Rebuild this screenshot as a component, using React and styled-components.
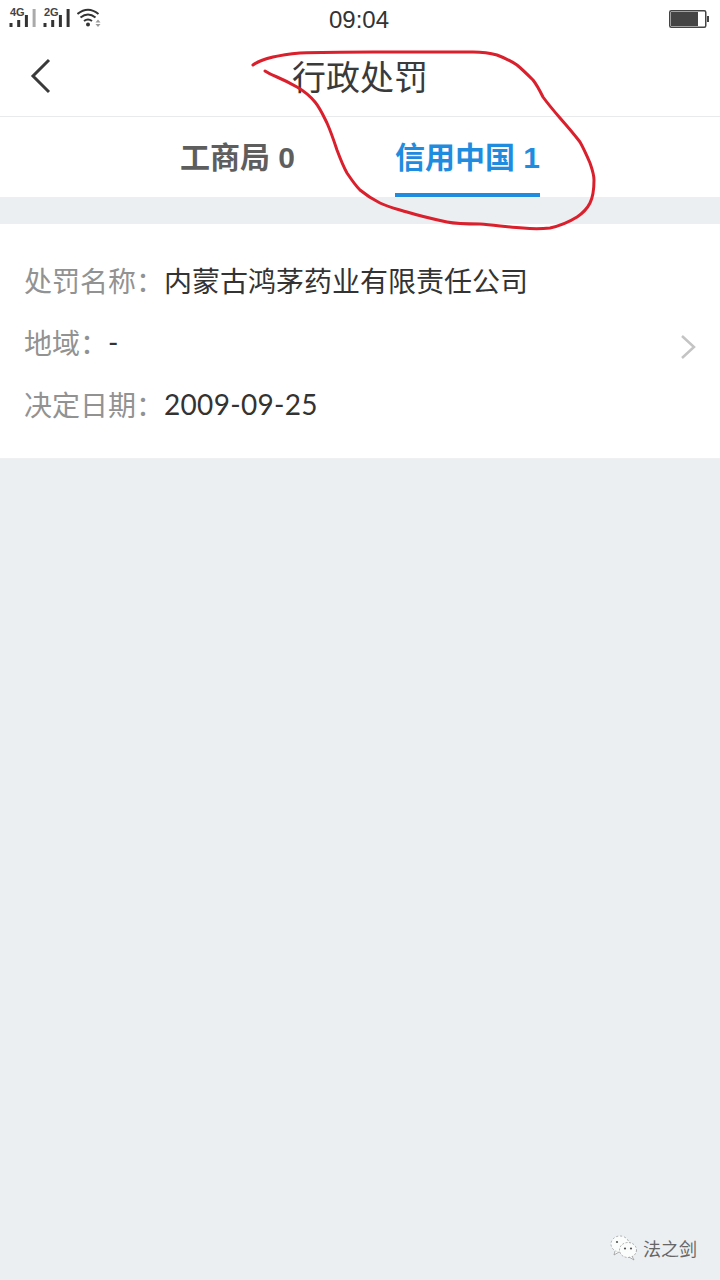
import React from 'react'
import styled, {createGlobalStyle} from 'styled-components'

const GlobalStyle = createGlobalStyle`
    html, body {
        margin: 0;
        padding: 0;
        background: #ebeff2;
    }
    body {
        font-family: "Liberation Sans", "Noto Sans CJK SC", sans-serif;
    }
`

const Page = styled.div`
    position: relative;
    width: 720px;
    height: 1280px;
    overflow: hidden;
    background: #ebeff2;
`

const StatusBar = styled.div`
    height: 38px;
    background: #fff;
    display: flex;
    align-items: center;
    justify-content: space-between;
    padding: 0 11px 0 9px;
    box-sizing: border-box;
`

const StatusSide = styled.div`
    width: 120px;
    display: flex;
    align-items: center;
    justify-content: ${props => props.$end ? 'flex-end' : 'flex-start'};
    padding-bottom: ${props => props.$end ? '0' : '6px'};
`

const Time = styled.div`
    font-size: 24px;
    color: #333;
    padding-top: 1px;
`

const Header = styled.div`
    height: 78px;
    background: #fff;
    border-bottom: 1px solid #e8eaec;
    display: flex;
    align-items: center;
    justify-content: center;
    position: relative;
`

const BackButton = styled.div`
    position: absolute;
    left: 29px;
    top: 20px;
    line-height: 0;
`

const Title = styled.div`
    font-size: 34px;
    color: #3a3a3a;
    margin-top: -4px;
`

const Tabs = styled.div`
    height: 80px;
    background: #fff;
    display: flex;
    justify-content: center;
    gap: 100px;
`

const Tab = styled.div`
    height: 80px;
    box-sizing: border-box;
    display: flex;
    align-items: center;
    font-size: 30px;
    font-weight: 700;
    color: ${props => props.$active ? '#1f8ce0' : '#5e5e5e'};
    border-bottom: 4px solid ${props => props.$active ? '#1f8ce0' : 'transparent'};
`

const Card = styled.div`
    margin-top: 27px;
    height: 235px;
    background: #fff;
    border-bottom: 1px solid #eef0f2;
    box-sizing: border-box;
    padding: 25px 25px 0 24px;
    display: flex;
    align-items: center;
    justify-content: space-between;
    position: relative;
`

const Rows = styled.div`
    display: flex;
    flex-direction: column;
    align-self: flex-start;
`

const Row = styled.div`
    height: 62px;
    display: flex;
    align-items: center;
    font-size: 28px;
`

const Label = styled.span`
    color: #929292;
`

const Value = styled.span`
    color: #333;
    font-family: ${props => props.$digits ? '"Lato", sans-serif' : 'inherit'};
    letter-spacing: ${props => props.$digits ? '0.3px' : '0'};
`

const Chevron = styled.div`
    line-height: 0;
    margin-right: -1px;
    margin-top: -14px;
`

const Watermark = styled.div`
    position: absolute;
    right: 23px;
    bottom: 18px;
    display: flex;
    align-items: center;
    gap: 5px;
    font-size: 18px;
    color: #666;
`

const Scribble = styled.svg`
    position: absolute;
    left: 0;
    top: 0;
    pointer-events: none;
`

function Signal({label, lastGrey}) {
    const heights = [4, 7, 12, 18]
    return (
        <svg width="34" height="24" viewBox="0 0 34 24">
            <text x="1" y="12" fontSize="11" fontWeight="700" fill="#444" fontFamily="Liberation Sans">{label}</text>
            {heights.map((h, i) => (
                <rect key={i} x={0.5 + i * 7.700} y={23 - h} width="3" height={h} fill={i === 3 && lastGrey ? '#aaa' : '#333'} />
            ))}
        </svg>
    )
}

function Wifi() {
    return (
        <svg width="24" height="24" viewBox="0 -4 24 24" fill="none" stroke="#333" strokeWidth="2">
            <path d="M0.500 6 Q11 -2.500 21.500 6" />
            <path d="M3.500 9.500 Q11 3.500 18.500 9.500" />
            <path d="M7 13 Q11 10 15 13" />
            <circle cx="11" cy="16.500" r="2" fill="#333" stroke="none" />
            <path d="M21 11.500 L23.500 14.500 L18.500 14.500 Z M18.500 16 L23.500 16 L21 19 Z" fill="#999" stroke="none" />
        </svg>
    )
}

function Battery() {
    return (
        <svg width="40" height="18" viewBox="0 0 40 18">
            <rect x="0.750" y="0.750" width="36" height="16.500" rx="1.500" fill="#fff" stroke="#444" strokeWidth="1.500" />
            <rect x="2" y="2" width="27" height="14" fill="#444" />
            <rect x="38" y="6" width="2" height="6" fill="#444" />
        </svg>
    )
}

function WechatMark() {
    return (
        <svg width="28" height="28" viewBox="0 0 28 28" fill="#fbfcfc" stroke="#999" strokeWidth="0.800">
            <ellipse cx="10" cy="10" rx="9" ry="8" strokeDasharray="2 2" />
            <path d="M5 17 L4 21 L9 18" />
            <ellipse cx="18" cy="16" rx="8.500" ry="7.500" strokeDasharray="2 1.500" />
            <path d="M22 22 L24 26 L19 23" />
            <circle cx="15" cy="14.500" r="1.100" fill="#555" stroke="none" />
            <circle cx="21" cy="14.500" r="1.100" fill="#555" stroke="none" />
            <circle cx="7" cy="8" r="1.100" fill="#555" stroke="none" />
        </svg>
    )
}

const scribblePath = 'M253 65 C258 61 265 59 273 57 C282 55 290 54 300 53 C325 52 350 52 373 52 C410 52 440 52 473 52 C482 52 490 53 497 55 C505 58 511 61 517 65 C523 70 528 75 533 80 C537 85 540 91 543 97 C548 104 554 111 560 118 C567 126 574 134 580 142 C584 149 587 156 590 163 C592 169 594 174 594 180 C594 189 593 197 590 203 C587 209 583 213 577 217 C569 222 559 226 550 228 C541 229 532 229 523 228 C508 227 494 225 480 224 C468 224 457 224 447 222 C433 219 420 216 407 212 C397 209 388 207 380 203 C372 199 366 195 360 190 C355 185 351 179 347 173 C343 166 340 158 337 150 C334 141 331 132 327 123 C323 115 320 108 315 102 C310 96 304 91 297 87 C290 83 284 80 277 77 C272 75 268 73 265 71'

export default function App() {
    return (
        <Page>
            <GlobalStyle />
            <StatusBar>
                <StatusSide>
                    <Signal label="4G" lastGrey />
                    <Signal label="2G" />
                    <Wifi />
                </StatusSide>
                <Time>09:04</Time>
                <StatusSide $end>
                    <Battery />
                </StatusSide>
            </StatusBar>
            <Header>
                <BackButton>
                    <svg width="24" height="36" viewBox="0 0 24 36" fill="none" stroke="#3a3a3a" strokeWidth="3">
                        <path d="M20 2 L4 18 L20 34" />
                    </svg>
                </BackButton>
                <Title>行政处罚</Title>
            </Header>
            <Tabs>
                <Tab>工商局 0</Tab>
                <Tab $active>信用中国 1</Tab>
            </Tabs>
            <Card>
                <Rows>
                    <Row><Label>处罚名称：</Label><Value>内蒙古鸿茅药业有限责任公司</Value></Row>
                    <Row><Label>地域：</Label><Value $digits>-</Value></Row>
                    <Row><Label>决定日期：</Label><Value $digits>2009-09-25</Value></Row>
                </Rows>
                <Chevron>
                    <svg width="16" height="26" viewBox="0 0 16 26" fill="none" stroke="#c4c4c4" strokeWidth="2.500">
                        <path d="M2 2 L14 13 L2 24" />
                    </svg>
                </Chevron>
            </Card>
            <Watermark>
                <WechatMark />
                <span>法之剑</span>
            </Watermark>
            <Scribble width="720" height="260" viewBox="0 0 720 260" fill="none" stroke="#d9202c" strokeWidth="3" strokeLinecap="round">
                <path d={scribblePath} />
            </Scribble>
        </Page>
    )
}
